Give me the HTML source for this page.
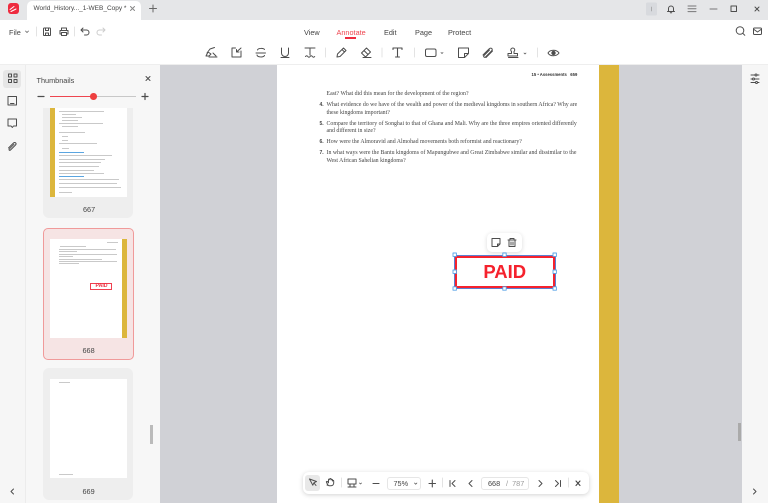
<!DOCTYPE html>
<html><head><meta charset="utf-8">
<style>
html,body{margin:0;padding:0;width:768px;height:503px;overflow:hidden;background:#fff;font-family:"Liberation Sans",sans-serif;color:#444}
#w{position:absolute;left:0;top:0;width:768px;height:503px;overflow:hidden;filter:blur(.3px)}
.a{position:absolute}
.t{position:absolute;white-space:nowrap}
svg{position:absolute;left:0;top:0}
.doc{font-family:"Liberation Serif",serif;font-size:5.85px;color:#444;line-height:7.8px;white-space:nowrap;position:absolute}
.num{font-weight:bold;font-family:"Liberation Sans",sans-serif;font-size:5px}
.thumb{position:absolute;left:43px;width:90px;background:#eee;border-radius:6px}
.tl{position:absolute;background:#888;height:.8px;opacity:.45}
</style></head><body><div id="w">
<div class="a" style="left:0;top:0;width:768px;height:20px;background:#e5e6e8"></div>
<div class="a" style="left:27px;top:1px;width:114px;height:19px;background:#fff;border-radius:5px 5px 0 0"></div>
<div class="a" style="left:8px;top:3px;width:11px;height:11px;background:#ee2b3f;border-radius:3px"></div>
<div class="t" style="left:33.5px;top:5px;font-size:6.5px;color:#444">World_History..._1-WEB_Copy *</div>
<div class="a" style="left:0;top:20px;width:768px;height:45px;background:#fff;border-radius:0 6px 0 0"></div>
<div class="a" style="left:0;top:64px;width:768px;height:1px;background:#eee"></div>
<div class="t" style="left:9px;top:27.500px;font-size:7.300px">File</div>
<div class="t" style="left:304px;top:27.500px;font-size:7.300px;color:#444">View</div>
<div class="t" style="left:336.500px;top:27.500px;font-size:7.300px;color:#ee4650">Annotate</div>
<div class="a" style="left:345px;top:37px;width:11px;height:1.500px;background:#ee2b3f"></div>
<div class="t" style="left:384px;top:27.500px;font-size:7.300px;color:#444">Edit</div>
<div class="t" style="left:415px;top:27.500px;font-size:7.300px;color:#444">Page</div>
<div class="t" style="left:448px;top:27.500px;font-size:7.300px;color:#444">Protect</div>

<div class="a" style="left:0;top:65px;width:25px;height:438px;background:#f6f6f6"></div>
<div class="a" style="left:25px;top:65px;width:1px;height:438px;background:#ececec"></div>
<div class="a" style="left:26px;top:65px;width:134px;height:438px;background:#f7f7f7"></div>
<div class="a" style="left:3px;top:70px;width:18px;height:18px;background:#e6e6e6;border-radius:3px"></div>
<div class="t" style="left:36.500px;top:75.500px;font-size:7.300px;color:#444">Thumbnails</div>
<div class="a" style="left:50px;top:96px;width:43px;height:1.300px;background:#ee4650"></div>
<div class="a" style="left:93px;top:96px;width:43px;height:1.300px;background:#c8c8c8"></div>
<div class="a" style="left:90px;top:93px;width:6.500px;height:6.500px;background:#ee4040;border-radius:50%"></div>

<div class="thumb" style="top:108px;height:110px;border-radius:0 0 6px 6px"></div>
<div class="a" style="left:50px;top:108px;width:77px;height:89px;background:#fff"></div>
<div class="a" style="left:50px;top:108px;width:4.500px;height:89px;background:#dcb63c"></div>
<div class="tl" style="left:59px;top:111px;width:45px"></div>
<div class="tl" style="left:62px;top:114px;width:14px"></div>
<div class="tl" style="left:62px;top:117px;width:20px"></div>
<div class="tl" style="left:62px;top:120px;width:16px"></div>
<div class="tl" style="left:59px;top:123px;width:44px"></div>
<div class="tl" style="left:62px;top:126px;width:16px"></div>
<div class="tl" style="left:59px;top:132px;width:26px"></div>
<div class="tl" style="left:62px;top:136px;width:6px"></div>
<div class="tl" style="left:62px;top:140px;width:6px"></div>
<div class="tl" style="left:59px;top:143px;width:38px"></div>
<div class="tl" style="left:62px;top:148px;width:7px"></div>
<div class="a" style="left:59px;top:152px;width:25px;height:.8px;background:#5aa5e0"></div>
<div class="tl" style="left:59px;top:155px;width:53px"></div>
<div class="tl" style="left:59px;top:159px;width:46px"></div>
<div class="tl" style="left:59px;top:162px;width:42px"></div>
<div class="tl" style="left:59px;top:166px;width:40px"></div>
<div class="tl" style="left:59px;top:170px;width:35px"></div>
<div class="tl" style="left:59px;top:173px;width:45px"></div>
<div class="a" style="left:59px;top:176px;width:25px;height:.8px;background:#5aa5e0"></div>
<div class="tl" style="left:59px;top:179px;width:60px"></div>
<div class="tl" style="left:59px;top:183px;width:58px"></div>
<div class="tl" style="left:59px;top:187px;width:62px"></div>
<div class="tl" style="left:59px;top:192px;width:13px"></div>
<div class="t" style="left:83px;top:204.500px;font-size:7.300px;color:#444">667</div>

<div class="a" style="left:43px;top:227.500px;width:88.500px;height:130px;background:#f6e4e4;border:1px solid #f09a9a;border-radius:5px"></div>
<div class="a" style="left:50px;top:238.500px;width:77px;height:99px;background:#fff"></div>
<div class="a" style="left:122px;top:238.500px;width:5px;height:99px;background:#dcb63c"></div>
<div class="tl" style="left:107px;top:241.500px;width:11px"></div>
<div class="tl" style="left:60px;top:246px;width:26px"></div>
<div class="tl" style="left:59px;top:249px;width:57px"></div>
<div class="tl" style="left:59px;top:251px;width:18px"></div>
<div class="tl" style="left:59px;top:254px;width:58px"></div>
<div class="tl" style="left:59px;top:256px;width:14px"></div>
<div class="tl" style="left:59px;top:258.500px;width:43px"></div>
<div class="tl" style="left:59px;top:261px;width:58px"></div>
<div class="tl" style="left:59px;top:263px;width:20px"></div>
<div class="a" style="left:89.500px;top:282.500px;width:20.500px;height:5.500px;border:1.200px solid #f04050;background:#fff"></div>
<div class="t" style="left:95.500px;top:283px;font-size:5.200px;font-weight:bold;color:#ee3040">PAID</div>
<div class="t" style="left:82.500px;top:346px;font-size:7.300px;color:#444">668</div>

<div class="thumb" style="top:368px;height:132px"></div>
<div class="a" style="left:50px;top:379px;width:77px;height:99px;background:#fff"></div>
<div class="tl" style="left:59px;top:382px;width:11px"></div>
<div class="tl" style="left:59px;top:474px;width:14px"></div>
<div class="t" style="left:82.500px;top:486.500px;font-size:7.300px;color:#444">669</div>
<div class="a" style="left:150px;top:425px;width:3px;height:19px;background:#bbb"></div>

<div class="a" style="left:160px;top:65px;width:582px;height:438px;background:#d0d1d6"></div>
<div class="a" style="left:742px;top:65px;width:26px;height:438px;background:#f6f6f6"></div>
<div class="a" style="left:738px;top:423px;width:3px;height:18px;background:#aaa"></div>
<div class="a" style="left:277px;top:65px;width:322px;height:438px;background:#fff"></div>
<div class="a" style="left:599px;top:65px;width:20px;height:438px;background:#dcb63c"></div>

<div class="t" style="left:531.500px;top:71.500px;font-size:4.200px;font-weight:bold;color:#333">15 • Assessments &nbsp;&nbsp;659</div>
<div class="doc" style="left:326.500px;top:91px">East? What did this mean for the development of the region?</div>
<div class="doc num" style="left:319.500px;top:102px">4.</div>
<div class="doc" style="left:326.500px;top:102px">What evidence do we have of the wealth and power of the medieval kingdoms in southern Africa? Why are<br>these kingdoms important?</div>
<div class="doc num" style="left:319.500px;top:120.500px">5.</div>
<div class="doc" style="left:326.500px;top:120.500px">Compare the territory of Songhai to that of Ghana and Mali. Why are the three empires oriented differently<br>and different in size?</div>
<div class="doc num" style="left:319.500px;top:139px">6.</div>
<div class="doc" style="left:326.500px;top:139px">How were the Almoravid and Almohad movements both reformist and reactionary?</div>
<div class="doc num" style="left:319.500px;top:150px">7.</div>
<div class="doc" style="left:326.500px;top:150px">In what ways were the Bantu kingdoms of Mapungubwe and Great Zimbabwe similar and dissimilar to the<br>West African Sahelian kingdoms?</div>

<div class="a" style="left:487px;top:233px;width:34.500px;height:18.500px;background:#fff;border-radius:5px;box-shadow:0 1px 5px rgba(0,0,0,.15)"></div>
<div class="a" style="left:455px;top:255.500px;width:99.500px;height:32px;border:2.800px solid #f5222d;outline:.5px solid #5c7fd0;box-sizing:border-box"></div>
<div class="t" style="left:455px;top:261px;width:99.500px;text-align:center;font-size:18.500px;font-weight:bold;color:#f5222d">PAID</div>

<div class="a" style="left:303px;top:472px;width:286px;height:22px;background:#fff;border-radius:6px;box-shadow:0 1px 5px rgba(0,0,0,.18)"></div>
<div class="a" style="left:305px;top:475px;width:15px;height:16px;background:#e8e8e8;border-radius:3px"></div>
<div class="a" style="left:387px;top:477px;width:34px;height:13px;border:.7px solid #e6e6e6;border-radius:3px;box-sizing:border-box"></div>
<div class="t" style="left:393.500px;top:479px;font-size:7.300px;color:#444">75%</div>
<div class="a" style="left:481px;top:477px;width:48px;height:13px;border:.7px solid #e6e6e6;border-radius:3px;box-sizing:border-box"></div>
<div class="t" style="left:488px;top:479px;font-size:7.300px;color:#444">668</div>
<div class="t" style="left:506px;top:479px;font-size:7.300px;color:#999">/ &nbsp;787</div>

<svg width="768" height="503" viewBox="0 0 768 503" fill="none" stroke="#4d4d4d" stroke-width="1" stroke-linecap="round" stroke-linejoin="round">
<path d="M10 9.500l4-3M11 11.500l5-2.500" stroke="#fff" stroke-width="1"/>
<path d="M130.500 6.500l4 4M134.500 6.500l-4 4" stroke="#888"/>
<path d="M153 5v7M149.500 8.500h7" stroke="#666"/>
<rect x="646" y="2.500" width="11" height="13" rx="1.500" fill="#d8dade" stroke="none"/>
<path d="M651.500 7v4" stroke="#999" stroke-width=".7"/>
<path d="M667.500 11.500h7M668.500 11.500v-3a2.500 2.500 0 0 1 5 0v3M670.300 12.800h1.400"/>
<path d="M688 6h8M688 8.800h8M688 11.600h8" stroke="#777"/>
<path d="M710 9h7" stroke="#777"/>
<rect x="731" y="6" width="5.500" height="5.500"/>
<path d="M755 7l4 4M759 7l-4 4"/>
<circle cx="740" cy="30.500" r="3.800"/><path d="M743 33.500l1.800 1.800"/>
<rect x="753.500" y="28" width="8" height="6.500" rx="1"/><path d="M754 29.500l3.500 2.500 3.500-2.500"/>
<path d="M25.500 31l1.500 1.500 1.500-1.500" stroke-width=".7"/>
<path d="M36.500 27v9" stroke="#e3e3e3"/>
<rect x="43.500" y="28" width="7" height="7.500" rx=".8"/><path d="M45.500 28v2.500h3V28M45.500 35.500v-2.500h3v2.500"/>
<path d="M61.500 30.500v-2.500h5v2.500M61.500 34h-1.500v-3.500h8V34h-1.500M61.500 32.500h5v3h-5z"/>
<path d="M74.500 27v9" stroke="#e3e3e3"/>
<path d="M81.500 30h5a2.500 2.500 0 0 1 0 5h-2M83 28l-2 2 2 2"/>
<path d="M104.500 30h-5a2.500 2.500 0 0 0 0 5h2M103 28l2 2-2 2" stroke="#ccc"/>
<path d="M207 53l3-4 4.500-1.500M206 56h3l2-2-3-2zM209 57h8M213 53l3 3" />
<path d="M235.500 48h-3.500v9h9v-6M236.500 52l4.500-4M236.500 49.500v2.500h2.500" />
<path d="M256 53h9.500M264.500 49.500c-1-1.500-6.500-1.500-7 .5M257 55c.5 2.500 6.500 2.500 7.500 .5"/>
<path d="M281.500 48v5a3.500 3.500 0 0 0 7 0v-5M281 57.500h8"/>
<path d="M305 48h10M310 48v7M305.500 56.500c1-1 1.500-1 2.300 0s1.500 1 2.300 0 1.500-1 2.300 0 1.500 1 2.300 0"/>
<path d="M325.500 48v9" stroke="#e3e3e3"/>
<path d="M337 57l.5-3 6-6 2.500 2.500-6 6zM342 49.500l2.500 2.500"/>
<path d="M361.500 53l5-5 4 4-5 5zM364 50.500l4 4M363 57.500h8"/>
<path d="M382 48v9" stroke="#e3e3e3"/>
<path d="M393 49.500v-1.500h9v1.500M397.500 48v9M395.500 57h4" stroke-width="1.100"/>
<path d="M414.500 48v9" stroke="#e3e3e3"/>
<rect x="425.500" y="49" width="10.500" height="7.500" rx="1.500"/>
<path d="M441 52.500l1 1 1-1" stroke-width=".7"/>
<path d="M458.500 48h10v5.500l-4 4h-6zM468.500 53.500h-4v4"/>
<path d="M483 55l6-6c2-2 4.500 0 2.500 2l-6 6c-1 1-2.500-.5-1.500-1.500l5.500-5.500M486 57.500l6.500-6.500"/>
<path d="M511.500 51.500a2 2 0 1 1 2.500 0v2h3.500v2.500h-9.500v-2.500h3.500zM508.500 57.500h9.500"/>
<path d="M524 53l1 1 1-1" stroke-width=".7"/>
<path d="M537.500 48v9" stroke="#e3e3e3"/>
<path d="M548 53c2-3.700 8.500-3.700 11 0c-2.500 3.700-9 3.700-11 0z"/><circle cx="553.500" cy="53" r="1.700" fill="#4d4d4d"/>
<path d="M8.500 74h3v3h-3zM14 74h3v3h-3zM8.500 79.500h3v3h-3zM14 79.500h3v3h-3z"/>
<path d="M8 96.500h8.500v8.500H8zM10.500 103.500h3.500"/>
<path d="M8 119h8.500v7h-3l-1.200 1.500-1.200-1.500H8z"/>
<path d="M8.500 148l5-5c1.500-1.500 3.500 .5 2 2l-5 5c-1 1-2-.2-1-1.200l4.500-4.500"/>
<path d="M146 76.500l4 4M150 76.500l-4 4"/>
<path d="M38 96.500h6" stroke-width="1.200"/><path d="M142 96.500h6M145 93.500v6" stroke-width="1.200"/>
<path d="M13.500 489l-2.500 2.500 2.500 2.500"/>
<path d="M753.500 489l2.500 2.500-2.500 2.500"/>
<path d="M751 75h8M751 79h8M751 82.500h8"/><circle cx="756" cy="75" r="1" fill="#f6f6f6"/><circle cx="753.500" cy="79" r="1" fill="#f6f6f6"/><circle cx="756.500" cy="82.500" r="1" fill="#f6f6f6"/>
<path d="M492 238.500h8v5.500l-2.500 2.500H492zM500 244h-2.500v2.500"/>
<path d="M508 240h8M510 240v-1.500h4v1.500M509 240.500v6h6v-6M511 242v3M513 242v3"/>
<g fill="#fff" stroke="#5aa5e8" stroke-width=".9">
<rect x="453" y="253" width="3.400" height="3.400"/><rect x="502.800" y="253" width="3.400" height="3.400"/><rect x="553" y="253" width="3.400" height="3.400"/>
<rect x="453" y="270" width="3.400" height="3.400"/><rect x="553" y="270" width="3.400" height="3.400"/>
<rect x="453" y="286.800" width="3.400" height="3.400"/><rect x="502.800" y="286.800" width="3.400" height="3.400"/><rect x="553" y="286.800" width="3.400" height="3.400"/>
</g>
<path d="M309.500 479l7 2.500-2.500 1.200-1.200 2.500zM314 483l2 2.500"/>
<path d="M328 485l-1.500-2.500c-.5-1 .5-1.500 1.200-.7l.8 1v-3c0-1 1.300-1 1.300 0v-.5c0-1 1.400-1 1.400 0v.7c0-.9 1.300-.9 1.300 0v1c0-.8 1.200-.8 1.200 0v2c0 1.500-1 2.700-2.700 2.700h-1.500c-1 0-1.700-.5-2.500-.7z"/>
<path d="M341.500 478v9" stroke="#e3e3e3"/>
<path d="M348 479h8v5h-8zM348 487h8M350 484v3M354 484v3"/>
<path d="M359.500 483l1 1 1-1" stroke-width=".7"/>
<path d="M373 483.500h6" stroke-width="1.100"/>
<path d="M429 483.500h6.500M432.300 480v7" stroke-width="1.100"/>
<path d="M414.500 483l1.200 1.200 1.200-1.200" stroke-width=".7"/>
<path d="M442.500 478v9" stroke="#e3e3e3"/>
<path d="M450 480.500v6M455 480.500l-3 3 3 3"/>
<path d="M472 480.500l-3 3 3 3"/>
<path d="M539 480.500l3 3-3 3"/>
<path d="M555.500 480.500l3 3-3 3M560.500 480.500v6"/>
<path d="M568.500 478v9" stroke="#e3e3e3"/>
<path d="M576 481l4 4.500M580 481l-4 4.500" stroke-width="1.100" stroke="#444"/>
</svg>
</div></body></html>
